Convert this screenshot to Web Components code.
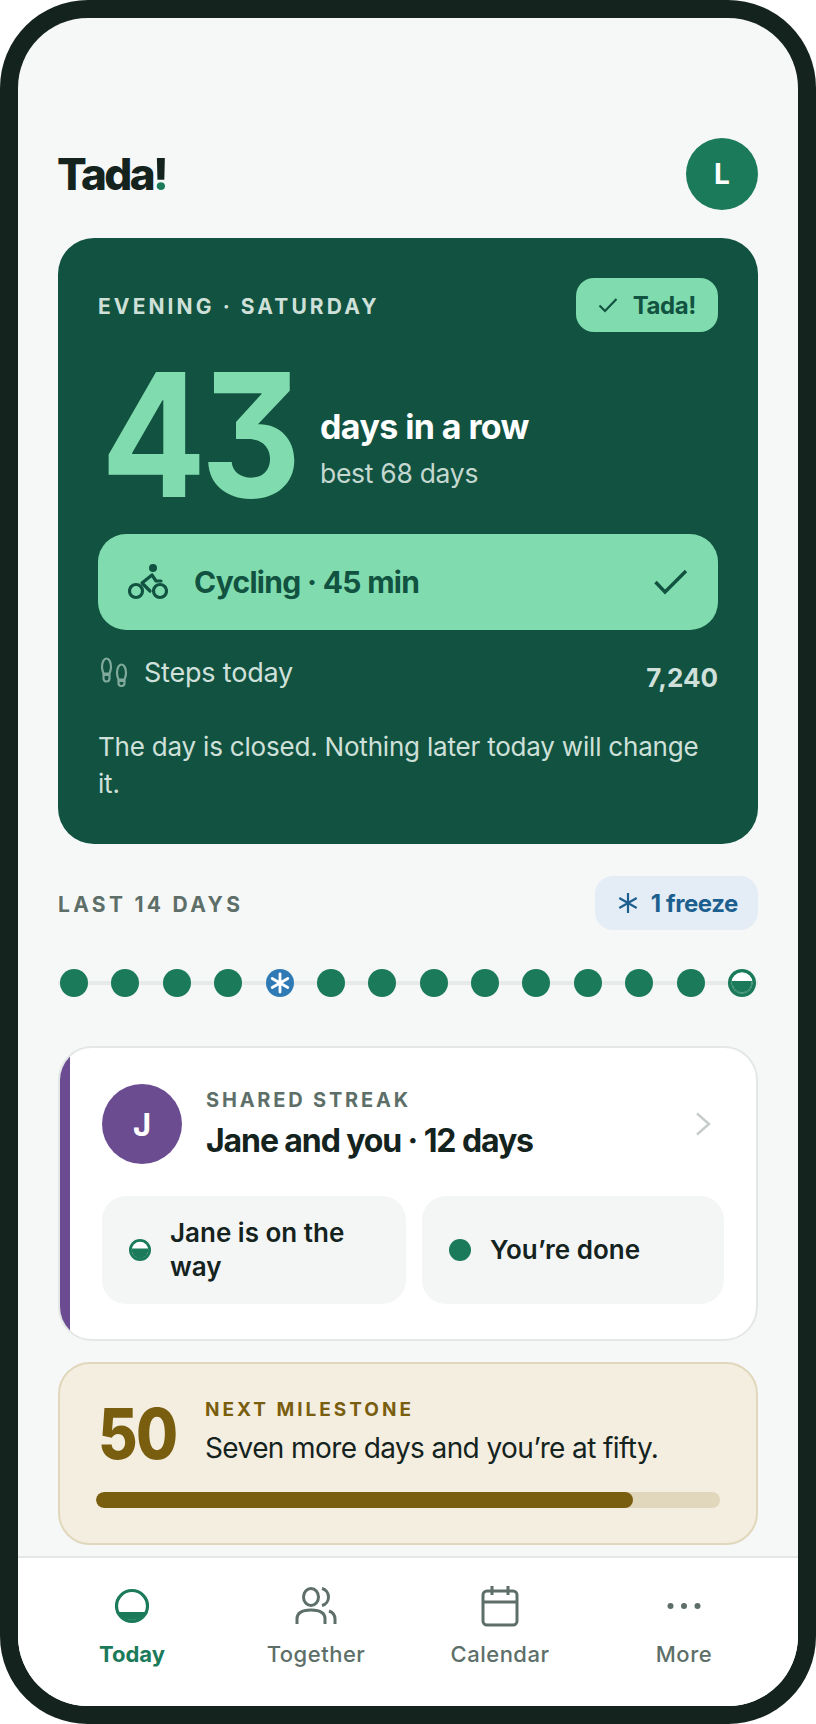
<!DOCTYPE html>
<html>
<head>
<meta charset="utf-8">
<title>Tada!</title>
<style>
html,body{margin:0;padding:0;background:#fff;}
body{font-family:'Inter',sans-serif;color:#14231e;}
</style>
</head>
<body>
<phone-frame>
  <app-header></app-header>
  <hero-card></hero-card>
  <days-strip></days-strip>
  <shared-card></shared-card>
  <milestone-card></milestone-card>
  <tab-bar slot="bar"></tab-bar>
</phone-frame>

<script>
const halfDot = (size, line) => `<svg width="${size}" height="${size}" viewBox="0 0 28 28"><circle cx="14" cy="14" r="14" fill="#1a7a5a"/><circle cx="14" cy="14" r="10.5" fill="#fff"/><path d="M3.7 12h20.600A10.500 10.500 0 1 1 3.700 12z" fill="#1a7a5a"/>${line ? '<circle cx="14" cy="14" r="9.600" fill="none" stroke="#6fb09a" stroke-width=".6" stroke-dasharray="30 30" transform="rotate(-10 14 14)"/><path d="M3.700 12h20.600a10.500 10.500 0 0 0-20.600 0z" fill="#fff"/>' : ''}</svg>`;

class PhoneFrame extends HTMLElement{
  constructor(){
    super();
    this.attachShadow({mode:'open'}).innerHTML=`
    <style>
      :host{display:block;width:816px;height:1724px;box-sizing:border-box;background:#14231e;border-radius:88px;padding:18px;}
      .screen{height:1688px;background:#f6f8f7;border-radius:70px;overflow:hidden;display:flex;flex-direction:column;}
      .scroll{flex:1;min-height:0;padding:120px 40px 0;display:flex;flex-direction:column;}
    </style>
    <div class="screen">
      <div class="scroll"><slot></slot></div>
      <slot name="bar"></slot>
    </div>`;
  }
}

class AppHeader extends HTMLElement{
  constructor(){
    super();
    this.attachShadow({mode:'open'}).innerHTML=`
    <style>
      :host{display:flex;justify-content:space-between;align-items:center;height:72px;margin-bottom:28px;}
      h1{margin:0;font:800 44px/72px 'Inter',sans-serif;letter-spacing:-2.6px;color:#14231e;margin-left:-1px;}
      h1 span{color:transparent;background:linear-gradient(#14231e 0 65%,#1a7a5a 65%);-webkit-background-clip:text;background-clip:text;}
      .av{width:72px;height:72px;border-radius:50%;background:#1a7a5a;color:#fff;display:flex;align-items:center;justify-content:center;font:700 28px 'Inter',sans-serif;}
    </style>
    <h1>Tada<span>!</span></h1>
    <div class="av">L</div>`;
  }
}

class HeroCard extends HTMLElement{
  constructor(){
    super();
    this.attachShadow({mode:'open'}).innerHTML=`
    <style>
      :host{display:block;height:606px;box-sizing:border-box;background:#115241;border-radius:36px;padding:40px;color:#fff;font-family:'Inter',sans-serif;}
      .top{display:flex;justify-content:space-between;align-items:center;height:54px;}
      .eyebrow{font-weight:700;font-size:21px;letter-spacing:3.100px;color:#cfe0d9;padding-top:2px;}
      .chip{display:flex;align-items:center;gap:15px;height:54px;box-sizing:border-box;padding:0 22px 0 22px;background:#80dcae;border-radius:18px;color:#115241;font-weight:700;font-size:24px;letter-spacing:-.4px;}
      .streak{display:flex;align-items:center;height:170px;margin-top:16px;}
      .num{width:222px;flex:none;font-weight:700;font-size:172px;line-height:170px;letter-spacing:-6px;color:#80dcae;font-feature-settings:"cv09";transform:translateX(3px) scaleX(.905);transform-origin:0 50%;padding-top:2px;}
      .say{margin-top:34px;}
      .big{font-weight:700;font-size:34px;line-height:46px;letter-spacing:-.6px;color:#fff;}
      .best{font-size:26.500px;line-height:46px;letter-spacing:-.3px;color:#c4d8d0;}
      .done{display:flex;align-items:center;height:96px;margin-top:16px;padding:0 30px;background:#80dcae;border-radius:28px;color:#115241;}
      .done b{font-weight:700;font-size:30px;letter-spacing:-.7px;margin-left:26px;flex:1;}
      .steps{display:flex;align-items:center;height:44px;margin-top:20px;color:#d0e0da;font-size:27px;letter-spacing:-.2px;}
      .steps span{margin-left:16px;flex:1;}
      .steps b{font-weight:700;font-size:26px;letter-spacing:0;position:relative;top:5px;}
      p{margin:34px 0 0;font-size:26px;line-height:37px;letter-spacing:-.2px;color:#cfe0d9;}
    </style>
    <div class="top">
      <div class="eyebrow">EVENING · SATURDAY</div>
      <div class="chip"><svg width="20" height="16" viewBox="0 0 20 16" fill="none" stroke="#115241" stroke-width="2.2"><path d="M1.5 8.5 7 14 18.5 2"/></svg>Tada!</div>
    </div>
    <div class="streak">
      <div class="num">43</div>
      <div class="say"><div class="big">days in a row</div><div class="best">best 68 days</div></div>
    </div>
    <div class="done">
      <svg width="40" height="36" viewBox="0 0 40 36" fill="none" stroke="#115241" stroke-width="3.200"><circle cx="8" cy="27" r="6.5"/><circle cx="32" cy="27" r="6.5"/><path d="M24 11 14 19l8 8M24 11l4 6h5" stroke-linecap="round" stroke-linejoin="round"/><circle cx="25" cy="4" r="4" fill="#115241" stroke="none"/></svg>
      <b>Cycling · 45 min</b>
      <svg width="34" height="26" viewBox="0 0 34 26" fill="none" stroke="#115241" stroke-width="3.4"><path d="M1.5 13 11 23 32 2"/></svg>
    </div>
    <div class="steps">
      <svg width="28" height="30" viewBox="0 0 28 30" fill="none" stroke="#80a99a" stroke-width="2.2" style="margin-left:2px"><path d="M2 10c0-5 2-8.500 4.500-8.500S11 5 11 10c0 3-1 5-1.500 6.500h-6C3 15 2 13 2 10zM3.500 18h6v3.500a3 3 0 0 1-6 0z"/><path d="M26 16c0-5-2-8.500-4.500-8.500S17 11 17 16c0 3 1 5 1.500 6.500h6C25 21 26 19 26 16zM18.500 24h6v2a3 3 0 0 1-6 0z"/></svg>
      <span>Steps today</span><b>7,240</b>
    </div>
    <p>The day is closed. Nothing later today will change it.</p>`;
  }
}

class DaysStrip extends HTMLElement{
  constructor(){
    super();
    const dots=[];
    for(let i=0;i<14;i++){
      if(i==4) dots.push(`<svg class="d" width="28" height="28" viewBox="0 0 28 28"><circle cx="14" cy="14" r="14" fill="#2f7ab5"/><path d="M14 5v18M6.200 9.500l15.600 9M6.200 18.500l15.600-9" stroke="#fff" stroke-width="2.800" stroke-linecap="round"/></svg>`);
      else if(i==13) dots.push(`<span class="d">${halfDot(28,true)}</span>`);
      else dots.push(`<span class="d o"></span>`);
    }
    this.attachShadow({mode:'open'}).innerHTML=`
    <style>
      :host{display:block;margin-top:32px;font-family:'Inter',sans-serif;}
      .head{display:flex;justify-content:space-between;align-items:center;height:54px;}
      .label{font-weight:700;font-size:21px;letter-spacing:3.300px;color:#5d6f68;padding-top:2px;}
      .chip{display:flex;align-items:center;gap:12px;height:54px;box-sizing:border-box;padding:0 20px 0 22px;background:#e4edf6;border-radius:18px;color:#1d5f8f;font-weight:700;font-size:24px;letter-spacing:-.4px;}
      .row{position:relative;display:flex;justify-content:space-between;padding:0 2px;margin-top:39px;height:28px;}
      .row::before{content:"";position:absolute;left:0;right:0;top:12px;height:4px;background:#e6ebe9;}
      .d{position:relative;display:block;width:28px;height:28px;}
      .o{border-radius:50%;background:#1a7a5a;}
    </style>
    <div class="head">
      <div class="label">LAST 14 DAYS</div>
      <div class="chip"><svg width="22" height="22" viewBox="0 0 22 22" stroke="#1d5f8f" stroke-width="2.200"><path d="M11 1v20M2.300 6l17.400 10M2.300 16 19.700 6"/></svg>1 freeze</div>
    </div>
    <div class="row">${dots.join('')}</div>`;
  }
}

class SharedCard extends HTMLElement{
  constructor(){
    super();
    this.attachShadow({mode:'open'}).innerHTML=`
    <style>
      :host{display:block;position:relative;overflow:hidden;box-sizing:border-box;height:295px;margin-top:49px;background:#fff;border:2px solid #e3e8e6;border-radius:34px;padding:36px 33px 0 42px;font-family:'Inter',sans-serif;}
      :host::before{content:"";position:absolute;left:0;top:0;bottom:0;width:10px;background:#6b4c91;}
      .top{display:flex;align-items:center;height:80px;}
      .av{width:80px;height:80px;border-radius:50%;background:#6b4c91;color:#fff;display:flex;align-items:center;justify-content:center;font-weight:700;font-size:31px;flex:none;}
      .txt{margin-left:24px;flex:1;}
      .lab{font-weight:700;font-size:20px;line-height:28px;letter-spacing:2.800px;color:#5d6f68;padding-top:2px;}
      .name{font-weight:700;font-size:32px;line-height:48px;letter-spacing:-1.100px;color:#14231e;padding-top:3px;}
      .chips{display:grid;grid-template-columns:304px 302px;gap:16px;margin-top:32px;}
      .c{display:flex;align-items:center;height:108px;box-sizing:border-box;padding:0 27px;gap:19px;background:#f4f6f5;border-radius:24px;font-weight:600;font-size:26px;line-height:34px;color:#14231e;}
      .c svg,.c i{flex:none;}
      .c i{display:block;width:22px;height:22px;border-radius:50%;background:#1a7a5a;}
    </style>
    <div class="top">
      <div class="av">J</div>
      <div class="txt"><div class="lab">SHARED STREAK</div><div class="name">Jane and you · 12 days</div></div>
      <svg width="16" height="24" viewBox="0 0 16 24" fill="none" stroke="#c5ccca" stroke-width="2.400" style="margin-right:12px"><path d="M2 1.500 14 12 2 22.500"/></svg>
    </div>
    <div class="chips">
      <div class="c">${halfDot(22,false)}<span>Jane is on the way</span></div>
      <div class="c"><i></i><span>You’re done</span></div>
    </div>`;
  }
}

class MilestoneCard extends HTMLElement{
  constructor(){
    super();
    this.attachShadow({mode:'open'}).innerHTML=`
    <style>
      :host{display:block;box-sizing:border-box;height:183px;margin-top:21px;background:#f4eee0;border:2px solid #e0d7bc;border-radius:32px;padding:38px 36px 0;font-family:'Inter',sans-serif;}
      .top{display:flex;align-items:center;height:62px;padding-left:2px;}
      .n{font-weight:800;font-size:70px;letter-spacing:-2px;color:#7a5e10;width:107px;flex:none;transform:scaleX(.87);transform-origin:0 50%;}
      .lab{font-weight:700;font-size:19px;line-height:24px;letter-spacing:3px;color:#7a5e10;margin-top:-1px;}
      .s{font-weight:400;font-size:28px;line-height:40px;letter-spacing:-.6px;color:#14231e;padding-top:6px;}
      .bar{height:16px;border-radius:8px;background:#e0d7bc;margin-top:28px;overflow:hidden;}
      .bar div{width:86%;height:100%;border-radius:8px;background:#7a5e10;}
    </style>
    <div class="top">
      <div class="n">50</div>
      <div><div class="lab">NEXT MILESTONE</div><div class="s">Seven more days and you’re at fifty.</div></div>
    </div>
    <div class="bar"><div></div></div>`;
  }
}

class TabBar extends HTMLElement{
  constructor(){
    super();
    this.attachShadow({mode:'open'}).innerHTML=`
    <style>
      :host{display:grid;grid-template-columns:repeat(4,184px);justify-content:center;box-sizing:border-box;height:150px;background:#fff;border-top:2px solid #e3e8e6;font-family:'Inter',sans-serif;}
      .t{display:flex;flex-direction:column;align-items:center;padding-top:26px;color:#5d6f68;font-weight:500;font-size:22px;letter-spacing:.5px;}
      .t.on{color:#1a7a5a;font-weight:700;letter-spacing:0;}
      .i{height:44px;display:flex;align-items:center;justify-content:center;}
      .l{margin-top:11px;line-height:30px;}
    </style>
    <div class="t on"><div class="i"><svg width="36" height="36" viewBox="0 0 36 36"><circle cx="18" cy="18" r="15.500" fill="none" stroke="#1a7a5a" stroke-width="3.200"/><path d="M4.700 24h26.600A15 15 0 0 1 4.700 24z" fill="#1a7a5a"/></svg></div><div class="l">Today</div></div>
    <div class="t"><div class="i"><svg width="42" height="40" viewBox="0 0 42 40" fill="none" stroke="#5d6f68" stroke-width="3"><ellipse cx="16" cy="11" rx="7.500" ry="8.500"/><path d="M2 38v-5c0-6 5-9 14-9s14 3 14 9v5"/><path d="M27 2.500c4 1 6.500 4.500 6.500 8.500s-2.500 7.500-6.500 8.500M34 25c4 1.500 6 4 6 8v5"/></svg></div><div class="l">Together</div></div>
    <div class="t"><div class="i"><svg width="38" height="42" viewBox="0 0 38 42" fill="none" stroke="#5d6f68" stroke-width="3"><rect x="2" y="6" width="34" height="34" rx="4"/><path d="M2 17h34M11 1v9M27 1v9"/></svg></div><div class="l">Calendar</div></div>
    <div class="t"><div class="i"><svg width="34" height="8" viewBox="0 0 34 8" fill="#5d6f68"><circle cx="3.500" cy="4" r="3"/><circle cx="17" cy="4" r="3"/><circle cx="30.500" cy="4" r="3"/></svg></div><div class="l">More</div></div>`;
  }
}

customElements.define('phone-frame',PhoneFrame);
customElements.define('app-header',AppHeader);
customElements.define('hero-card',HeroCard);
customElements.define('days-strip',DaysStrip);
customElements.define('shared-card',SharedCard);
customElements.define('milestone-card',MilestoneCard);
customElements.define('tab-bar',TabBar);
</script>
</body>
</html>
